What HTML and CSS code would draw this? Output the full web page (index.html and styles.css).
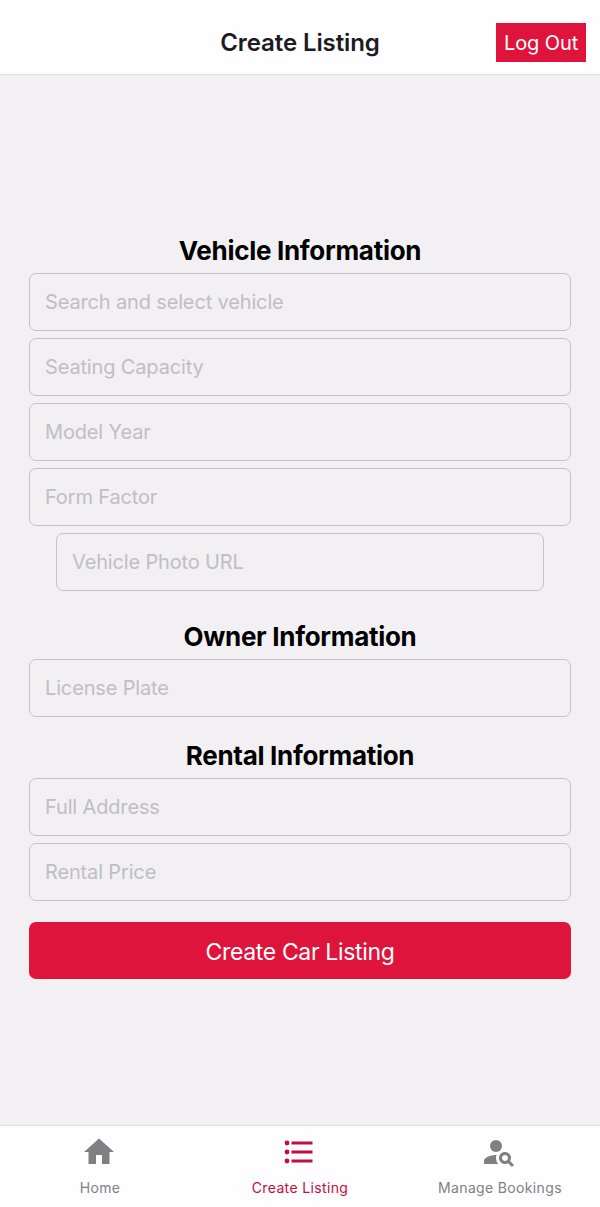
FILE: index.html
```
<!DOCTYPE html>
<html lang="en">
<head>
<meta charset="utf-8">
<title>Create Listing</title>
<link rel="stylesheet" href="styles.css">
</head>
<body>
<div class="app">
  <header class="header">
    <h1 class="header-title">Create Listing</h1>
    <button class="logout">Log Out</button>
  </header>
  <main class="content">
    <section class="group">
      <h2 class="group-title">Vehicle Information</h2>
      <input class="field" placeholder="Search and select vehicle">
      <input class="field" placeholder="Seating Capacity">
      <input class="field" placeholder="Model Year">
      <input class="field" placeholder="Form Factor">
      <input class="field field-inset" placeholder="Vehicle Photo URL">
    </section>
    <section class="group group-owner">
      <h2 class="group-title">Owner Information</h2>
      <input class="field" placeholder="License Plate">
    </section>
    <section class="group group-rental">
      <h2 class="group-title">Rental Information</h2>
      <input class="field" placeholder="Full Address">
      <input class="field" placeholder="Rental Price">
    </section>
    <button class="submit">Create Car Listing</button>
  </main>
  <nav class="tabs">
    <a class="tab">
      <svg class="icon" viewBox="0 0 24 24"><path d="M10 20v-6h4v6h5v-8h3L12 3 2 12h3v8z"/></svg>
      <span class="tab-label">Home</span>
    </a>
    <a class="tab tab-active">
      <svg class="icon" viewBox="0 0 24 24"><circle cx="4" cy="6" r="1.6"/><circle cx="4" cy="12" r="1.6"/><circle cx="4" cy="18" r="1.6"/><path d="M7 19h14v-2H7v2zm0-6h14v-2H7v2zm0-8v2h14V5H7z"/></svg>
      <span class="tab-label">Create Listing</span>
    </a>
    <a class="tab">
      <svg class="icon" viewBox="0 0 24 24"><circle cx="10" cy="8" r="4"/><path d="M10.350 14.010C7.620 13.910 2 15.270 2 18v2h9.540c-2.470-2.760-1.230-5.890-1.190-5.990zM19.430 18.020c.36-.59.57-1.280.57-2.020 0-2.210-1.790-4-4-4s-4 1.790-4 4 1.790 4 4 4c.74 0 1.430-.22 2.020-.57L20.590 22 22 20.590l-2.570-2.570zM16 18c-1.100 0-2-.9-2-2s.9-2 2-2 2 .9 2 2-.9 2-2 2z"/></svg>
      <span class="tab-label">Manage Bookings</span>
    </a>
  </nav>
</div>
</body>
</html>
```
FILE: styles.css
```
* { box-sizing: border-box; }
body { margin: 0; font-family: Inter, "Liberation Sans", sans-serif; }
h1, h2 { margin: 0; }
button { font-family: inherit; border: 0; color: #fff; padding: 0; }

.app {
  height: 1207px;
  display: flex;
  flex-direction: column;
  background: #f2f0f3;
}
.header {
  height: 75px;
  flex: none;
  display: grid;
  grid-template-columns: 1fr auto 1fr;
  align-items: center;
  padding: 10px 14px 0;
  background: #fefdff;
  border-bottom: 1px solid #dedce0;
}
.header-title {
  grid-column: 2;
  padding-top: 2px;
  font-size: 24px;
  font-weight: 600;
  letter-spacing: -0.1px;
  line-height: 30px;
  color: #1c1c1e;
}
.logout {
  justify-self: end;
  width: 90px;
  height: 39px;
  padding-top: 2px;
  background: #df143c;
  font-size: 20px;
  letter-spacing: -0.1px;
}
.content {
  flex: 1;
  display: flex;
  flex-direction: column;
  padding: 157px 29px 0;
}
.group {
  display: flex;
  flex-direction: column;
  gap: 7px;
}
.group-title {
  height: 34px;
  line-height: 37px;
  text-align: center;
  font-size: 26px;
  font-weight: 700;
  letter-spacing: -0.3px;
  color: #000;
}
.group-owner { margin-top: 27px; }
.group-rental { margin-top: 20px; }
.field {
  width: 100%;
  height: 58px;
  padding: 0 15px 1px;
  border: 1px solid #c4c2c6;
  border-radius: 7px;
  background: transparent;
  font: 20px Inter, "Liberation Sans", sans-serif;
  letter-spacing: -0.15px;
}
.field::placeholder { color: #c0bec3; opacity: 1; }
.field-inset { width: 488px; align-self: center; }
.submit {
  height: 57px;
  margin-top: 21px;
  padding-top: 3px;
  flex: none;
  border-radius: 7px;
  background: #df143c;
  font-size: 23px;
  letter-spacing: -0.35px;
}
.tabs {
  flex: none;
  height: 82px;
  display: grid;
  grid-template-columns: repeat(3, 1fr);
  background: #fefdff;
  border-top: 1px solid #dedce0;
}
.tab {
  display: flex;
  flex-direction: column;
  align-items: center;
  padding-top: 8px;
  color: #808084;
}
.tab-active { color: #c20f3a; }
.icon { width: 36px; height: 36px; margin-right: 2px; fill: currentColor; }
.tab-label {
  margin-top: 9px;
  font-size: 14px;
  line-height: 18px;
  letter-spacing: 0.35px;
}
```
